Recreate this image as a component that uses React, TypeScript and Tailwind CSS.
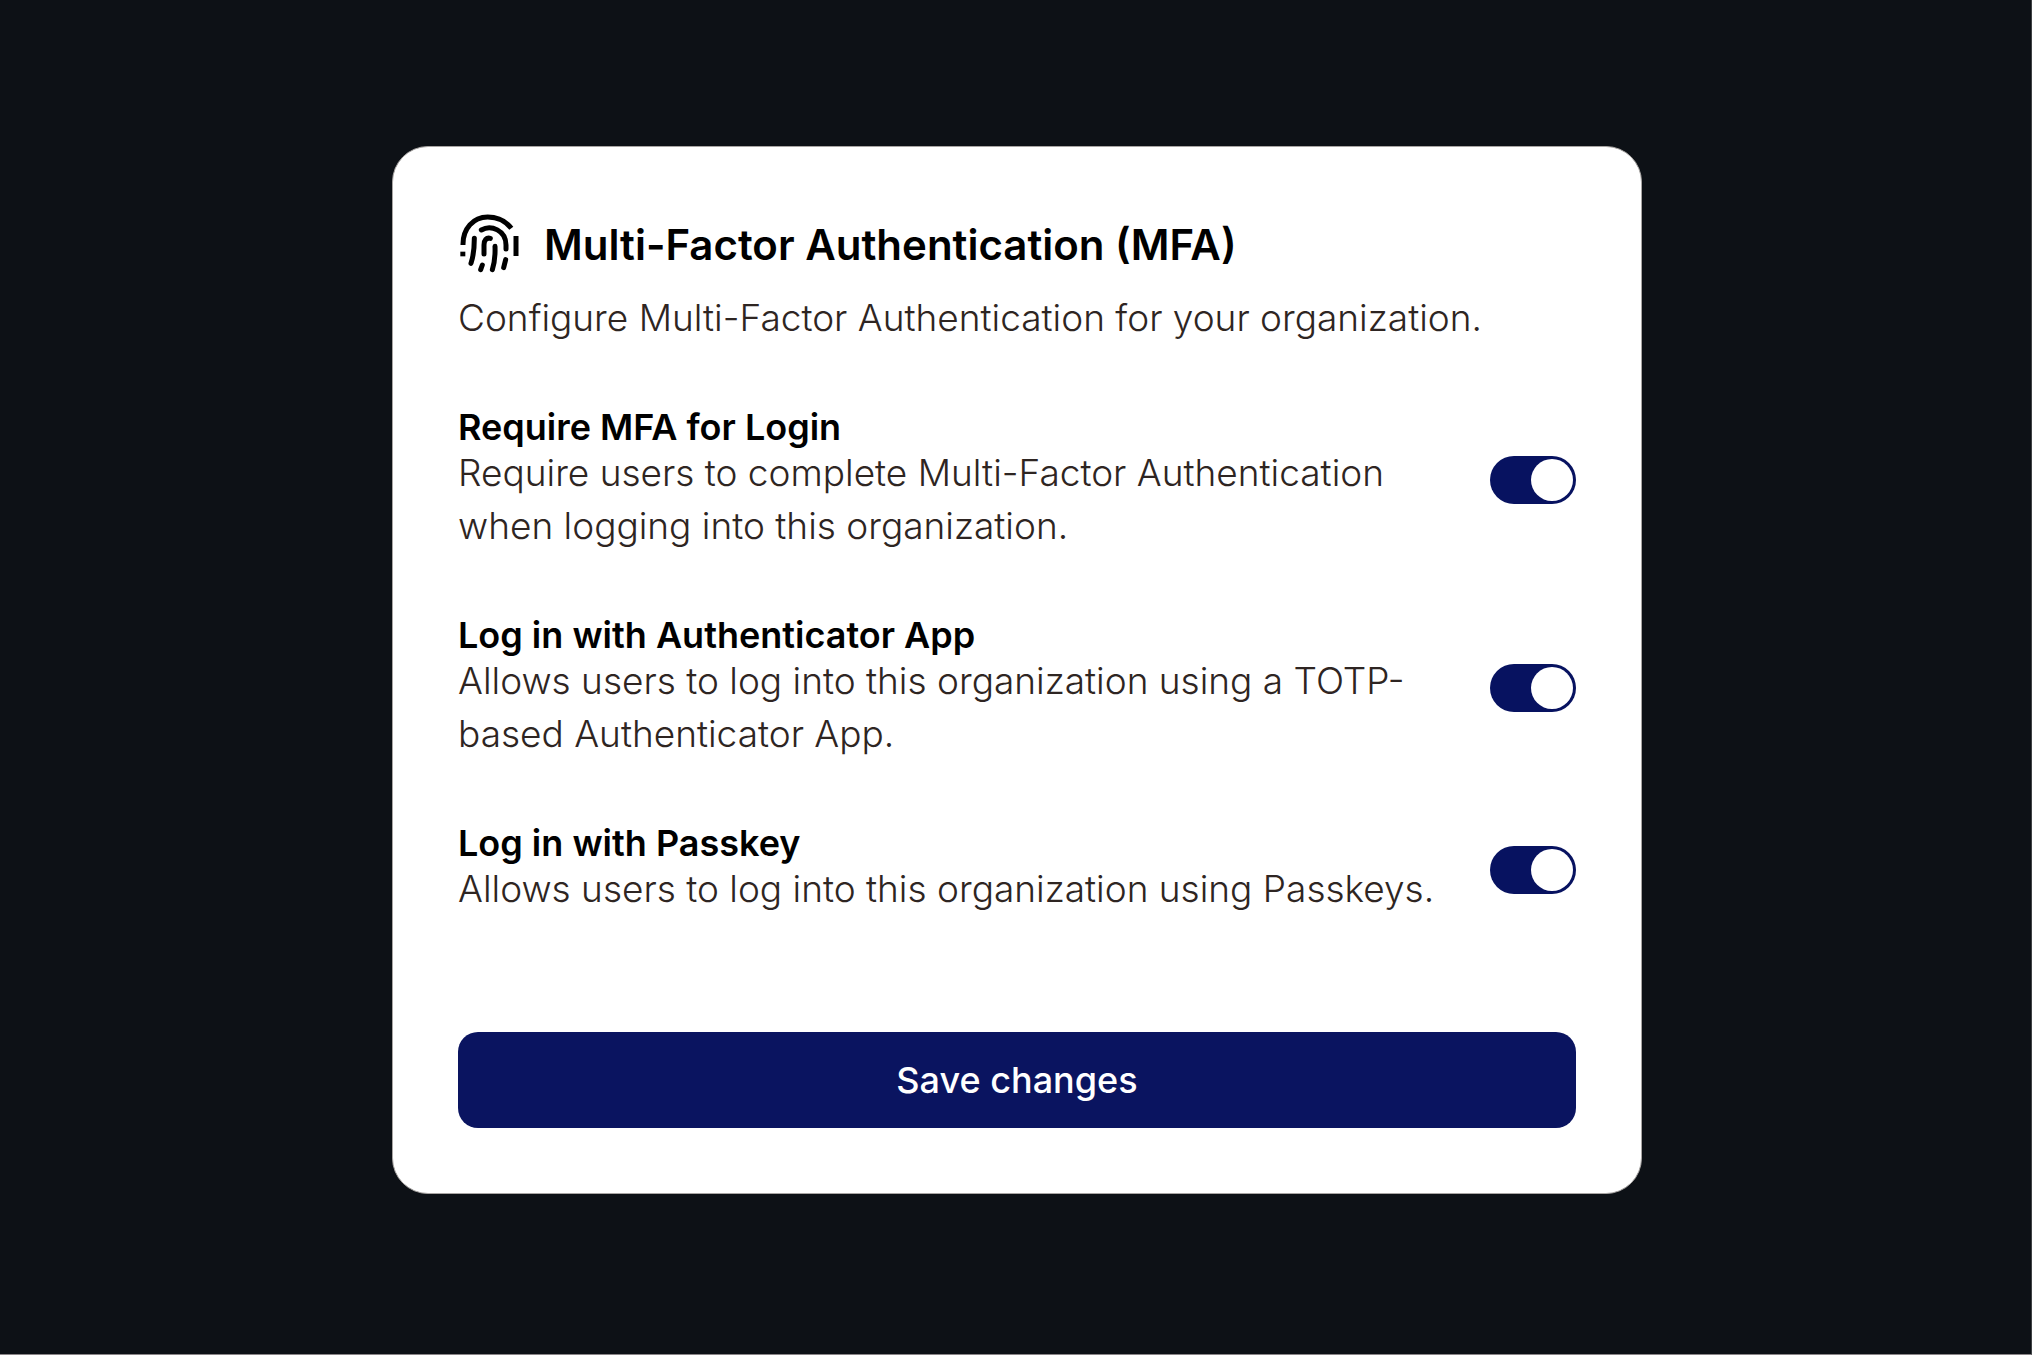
import { useState } from "react";

const options = [
  { id: "require", title: "Require MFA for Login", text: "Require users to complete Multi-Factor Authentication when logging into this organization." },
  { id: "totp", title: "Log in with Authenticator App", text: "Allows users to log into this organization using a TOTP-based Authenticator App." },
  { id: "passkey", title: "Log in with Passkey", text: "Allows users to log into this organization using Passkeys." },
];

function FingerprintIcon() {
  return (
    <svg viewBox="54 36 192 192" className="size-16 shrink-0 text-black" fill="none" stroke="currentColor" strokeWidth="15" aria-hidden="true">
      <path d="M69 135C68 86 100 51 143 51C172 51 198 64 214 85" />
      <path d="M61 162h15" strokeWidth="14" />
      <path d="M228 108v60" />
      <g strokeLinecap="round">
        <path d="M103 115C103 145 100 169 93 190" />
        <path d="M124 90C153 73 198 91 198 135V147" />
        <path d="M151 115C139 112 132 121 132 135V162" />
        <path d="M165 139C166 165 163 190 157 209" />
        <path d="M127 195L122 209" />
        <path d="M197 179L191 203" />
      </g>
    </svg>
  );
}

function Option({ id, title, text }: { id: string; title: string; text: string }) {
  const [on, setOn] = useState(true);
  return (
    <div className="flex items-center justify-between gap-12">
      <div className="flex-1">
        <label htmlFor={id} className="block text-[36px] leading-[38px] font-semibold text-black">{title}</label>
        <p id={id + "-text"} className="text-[37px] leading-[53px] font-light text-[#2e2522]">{text}</p>
      </div>
      <input
        id={id}
        type="checkbox"
        role="switch"
        aria-describedby={id + "-text"}
        checked={on}
        onChange={(e) => setOn(e.target.checked)}
        className="h-12 w-[86px] shrink-0 cursor-pointer appearance-none rounded-full bg-[#a3a3a3] p-[3px] before:block before:size-[42px] before:rounded-full before:bg-white before:transition-transform checked:bg-[#071260] checked:before:translate-x-[38px]"
      />
    </div>
  );
}

export default function App() {
  return (
    <main className="flex min-h-screen justify-center border-r border-b border-r-[#3f4245] border-b-[#8a8588] bg-[#0d1116] pt-[146px] pr-8 pb-40 pl-[35px] font-['Inter',sans-serif]">
      <form onSubmit={(e) => e.preventDefault()} className="w-full max-w-[1250px] self-start rounded-[36px] border border-[#a8a5a3] bg-white p-[65px]">
        <div className="flex items-start gap-[22px]">
          <FingerprintIcon />
          <h1 className="text-[42px] leading-[66px] font-semibold text-black">Multi-Factor Authentication (MFA)</h1>
        </div>
        <p className="text-[37px] leading-[80px] font-light text-[#2e2522]">Configure Multi-Factor Authentication for your organization.</p>
        <div className="mt-[50px] flex flex-col gap-16">
          {options.map((o) => <Option key={o.id} {...o} />)}
        </div>
        <button type="submit" className="mt-[117px] h-24 w-full cursor-pointer rounded-[20px] bg-[#0a1460] text-[36px] font-medium text-white">Save changes</button>
      </form>
    </main>
  );
}
